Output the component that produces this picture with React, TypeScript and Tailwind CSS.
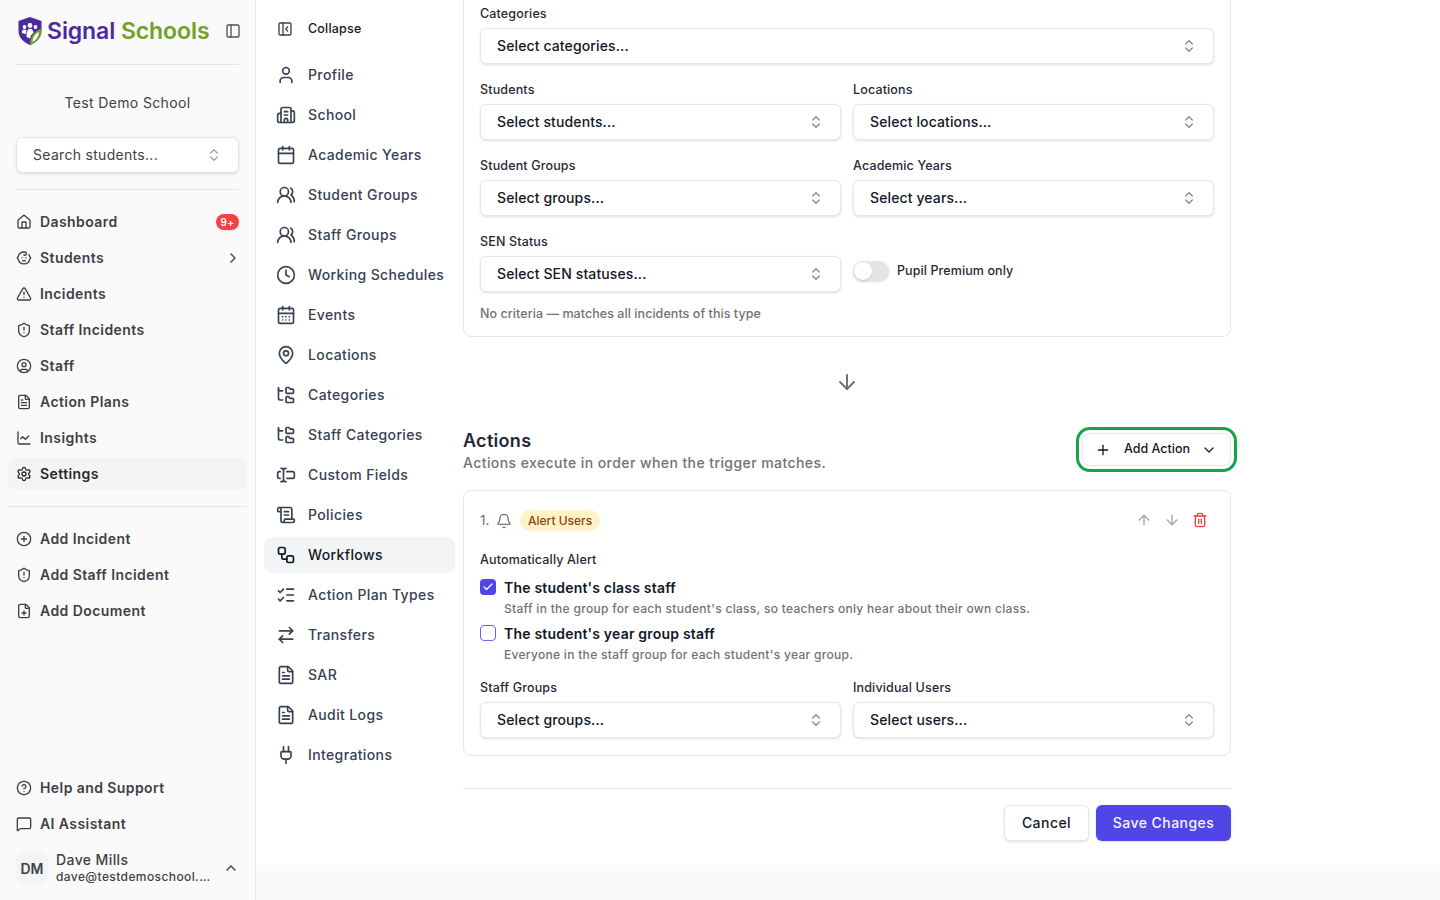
import React from "react";
import {
  House, Baby, TriangleAlert, ShieldAlert, CircleUser, FileText, ChartLine, Settings, CirclePlus, FilePlus,
  CircleHelp, MessageSquare, ChevronUp, ChevronRight, ChevronDown, ChevronsUpDown, PanelLeft, PanelLeftClose, User,
  Building2, Calendar, UsersRound, Clock, CalendarDays, MapPin, FolderTree, TextCursorInput, ScrollText, Workflow,
  ListChecks, ArrowRightLeft, Plug, ArrowDown, ArrowUp, Plus, Bell, Trash2, Check,
} from "lucide-react";

function NavItem({ icon: Icon, label, active, right }: { icon: any; label: string; active?: boolean; right?: React.ReactNode }) {
  return (
    <div className={`flex h-8 items-center gap-2 rounded-lg px-2 text-[14px] font-semibold tracking-[0.42px] ${active ? "bg-[#f4f4f5] text-[#27272a]" : "text-[#3f3f46]"}`}>
      <Icon size={16} strokeWidth={2} className="shrink-0" />
      <span className="flex-1 whitespace-nowrap pb-[2px]">{label}</span>
      {right}
    </div>
  );
}

function SettingsItem({ icon: Icon, label, active }: { icon: any; label: string; active?: boolean }) {
  return (
    <div className={`flex h-9 w-[191px] items-center gap-3 rounded-lg px-3 text-[14px] font-medium tracking-[0.38px] ${active ? "bg-[#f3f4f6] text-[#111827]" : "text-[#374151]"}`}>
      <Icon size={20} strokeWidth={2} className="shrink-0" />
      <span className="whitespace-nowrap pb-[2px]">{label}</span>
    </div>
  );
}

function Field({ label, placeholder }: { label: string; placeholder: string }) {
  return (
    <div className="flex flex-col gap-1">
      <div className="h-5 text-[12.5px] font-medium leading-5 tracking-[0.15px] text-[#1f2937]">{label}</div>
      <Select placeholder={placeholder} />
    </div>
  );
}

function Select({ placeholder }: { placeholder: string }) {
  return (
    <div className="flex h-9 items-center justify-between rounded-md border border-[#e5e7eb] bg-white pl-4 pr-4 text-[14px] font-medium tracking-[0.12px] text-[#111827] shadow-sm">
      <span className="pb-[2px]">{placeholder}</span>
      <ChevronsUpDown size={16} className="text-[#8a8a93]" />
    </div>
  );
}

function Logo() {
  return (
    <svg width="26" height="30" viewBox="0 0 26 30" className="shrink-0">
      <path d="M13 1 L24.5 5 V15 C24.5 22 19 26.5 13 29 C7 26.5 1.5 22 1.5 15 V5 Z" fill="#4a2a9e" />
      <path d="M24.5 12.5 V15 C24.5 22 19 26.5 13 29 C12.4 23 16 15.5 24.5 12.5 Z" fill="#6fa327" />
      <path d="M15.5 26 C15.5 21 18.5 17.5 22 16 C21.5 20.5 19.5 24 15.5 26 Z" fill="#ffffff" />
      <circle cx="13" cy="9.5" r="2.4" fill="#fff" />
      <circle cx="7.5" cy="11" r="1.9" fill="#fff" />
      <circle cx="18.5" cy="11" r="1.9" fill="#fff" />
      <path d="M4.8 17 C4.8 14.6 6 13.6 7.5 13.6 C8.4 13.6 9.1 13.9 9.6 14.5 C8.9 15.6 8.8 16.6 8.9 18 Z" fill="#fff" />
      <path d="M9.6 21 C9.3 16 10.6 12.8 13 12.8 C15.4 12.8 16.4 14.8 16.5 17 C15 18 13.5 19.8 13 22.5 Z" fill="#fff" />
    </svg>
  );
}

const settingsItems: [any, string][] = [
  [User, "Profile"], [Building2, "School"], [Calendar, "Academic Years"], [UsersRound, "Student Groups"],
  [UsersRound, "Staff Groups"], [Clock, "Working Schedules"], [CalendarDays, "Events"], [MapPin, "Locations"],
  [FolderTree, "Categories"], [FolderTree, "Staff Categories"], [TextCursorInput, "Custom Fields"], [ScrollText, "Policies"],
  [Workflow, "Workflows"], [ListChecks, "Action Plan Types"], [ArrowRightLeft, "Transfers"], [FileText, "SAR"],
  [FileText, "Audit Logs"], [Plug, "Integrations"],
];

export default function App() {
  return (
    <div className="flex h-[900px] w-[1440px] overflow-hidden bg-white font-['Inter','Liberation_Sans',sans-serif]">
      {/* Primary sidebar */}
      <aside className="flex h-full w-[256px] shrink-0 flex-col border-r border-[#e5e7eb] bg-[#fafafa] px-2">
        <div className="mx-2 flex h-[65px] items-center border-b border-[#e4e4e7] pb-[2px]">
          <div className="ml-[1px]"><Logo /></div>
          <div className="ml-[4px] flex-1 whitespace-nowrap text-[23px] font-semibold tracking-[-0.08px]">
            <span className="text-[#4a2a9e]">Signal</span> <span className="text-[#6fa327]">Schools</span>
          </div>
          <PanelLeft size={16} className="text-[#52525b] mr-[-2px]" />
        </div>
        <div className="mt-[28px] h-5 text-center text-[14px] leading-5 tracking-[0.35px] text-[#3f3f46]">Test Demo School</div>
        <div className="mx-2 mt-[24px] flex h-9 items-center justify-between rounded-md border border-[#e4e4e7] bg-white pl-4 pr-[16px] text-[14px] tracking-[0.3px] text-[#3f3f46] shadow-sm">
          <span className="pb-[2px]">Search students...</span>
          <ChevronsUpDown size={16} className="text-[#a1a1aa]" />
        </div>
        <div className="mx-2 mt-4 border-b border-[#e4e4e7]" />
        <div className="mt-4 flex flex-col gap-1">
          <NavItem icon={House} label="Dashboard" right={<span className="w-[23px] rounded-lg bg-[#ef4444] text-center text-[10px] font-semibold leading-4 text-white shadow-sm">9+</span>} />
          <NavItem icon={Baby} label="Students" right={<ChevronRight size={16} className="-mr-[2px] text-[#3f3f46]" />} />
          <NavItem icon={TriangleAlert} label="Incidents" />
          <NavItem icon={ShieldAlert} label="Staff Incidents" />
          <NavItem icon={CircleUser} label="Staff" />
          <NavItem icon={FileText} label="Action Plans" />
          <NavItem icon={ChartLine} label="Insights" />
          <NavItem icon={Settings} label="Settings" active />
        </div>
        <div className="mt-4 border-b border-[#e4e4e7]" />
        <div className="mt-4 flex flex-col gap-1">
          <NavItem icon={CirclePlus} label="Add Incident" />
          <NavItem icon={ShieldAlert} label="Add Staff Incident" />
          <NavItem icon={FilePlus} label="Add Document" />
        </div>
        <div className="mt-auto flex flex-col gap-1">
          <NavItem icon={CircleHelp} label="Help and Support" />
          <NavItem icon={MessageSquare} label="AI Assistant" />
        </div>
        <div className="mb-4 mt-3 flex h-8 items-center gap-2 pl-2 pr-2">
          <div className="flex h-8 w-8 shrink-0 items-center justify-center rounded-lg bg-[#f4f4f5] text-[14px] font-semibold text-[#3f3f46]">DM</div>
          <div className="min-w-0 flex-1">
            <div className="text-[14px] font-medium leading-4 tracking-[0.4px] text-[#3f3f46]">Dave Mills</div>
            <div className="mt-[1px] w-[156px] truncate text-[12px] font-medium leading-4 tracking-[0.4px] text-[#3f3f46]">dave@testdemoschool.org.uk</div>
          </div>
          <ChevronUp size={16} className="text-[#3f3f46]" />
        </div>
      </aside>

      {/* Main column */}
      <div className="flex min-w-0 flex-1 flex-col">
        <div className="flex h-[865px] bg-white">
          {/* Settings nav */}
          <nav className="flex w-[207px] shrink-0 flex-col gap-1 pl-2 pt-[11px]">
            <div className="mb-[6px] flex h-9 items-center gap-3 px-3 text-[12.5px] font-medium tracking-[0.2px] text-[#111827]">
              <PanelLeftClose size={16} className="mx-[1px] text-[#374151]" />
              <span className="ml-[2px]">Collapse</span>
            </div>
            {settingsItems.map(([icon, label]) => (
              <SettingsItem key={label} icon={icon} label={label} active={label === "Workflows"} />
            ))}
          </nav>

          {/* Content */}
          <main className="-mt-[13px] w-[768px] shrink-0">
            <section className="flex flex-col gap-4 rounded-lg border border-[#e5e7eb] px-4 pb-[13px] pt-4">
              <Field label="Categories" placeholder="Select categories..." />
              <div className="grid grid-cols-2 gap-x-3 gap-y-4">
                <Field label="Students" placeholder="Select students..." />
                <Field label="Locations" placeholder="Select locations..." />
                <Field label="Student Groups" placeholder="Select groups..." />
                <Field label="Academic Years" placeholder="Select years..." />
                <Field label="SEN Status" placeholder="Select SEN statuses..." />
                <div className="mt-[29px] flex h-5 items-center gap-2">
                  <div className="flex h-5 w-9 items-center rounded-full bg-[#e5e5e5] pl-[1px] shadow-sm">
                    <div className="h-[18px] w-[18px] rounded-full bg-white shadow" />
                  </div>
                  <span className="text-[12.5px] font-medium tracking-[0.1px] text-[#1f2937]">Pupil Premium only</span>
                </div>
              </div>
              <div className="-mt-[3px] h-[18px] text-[12.5px] font-medium leading-[18px] tracking-[0.06px] text-[#71717a]">No criteria — matches all incidents of this type</div>
            </section>

            <div className="mt-[33px] flex justify-center">
              <ArrowDown size={24} className="text-[#71717a]" />
            </div>

            <div className="mt-[30px] flex items-start justify-between">
              <div className="pt-[3px]">
                <h2 className="text-[18px] font-semibold leading-7 tracking-[0.3px] text-[#1f2937]">Actions</h2>
                <p className="-mt-[2px] text-[14px] font-medium leading-5 tracking-[0.42px] text-[#71717a]">Actions execute in order when the trigger matches.</p>
              </div>
              <button className="mt-[9px] flex h-[33px] w-[149px] items-center rounded-lg border border-[#e5e7eb] bg-white pl-[12px] text-[12.5px] font-medium tracking-[0px] text-[#111827] outline-[3px] outline-offset-[3px] outline-[#16a34a]">
                <Plus size={16} />
                <span className="ml-[13px]">Add Action</span>
                <ChevronDown size={16} className="ml-[11px] text-[#27272a]" />
              </button>
            </div>

            <section className="mt-[17px] rounded-lg border border-[#e5e7eb] px-4 pb-[17px] pt-[19px]">
              <div className="flex h-[21px] items-center">
                <span className="w-[16px] text-[13.5px] text-[#71717a]">1.</span>
                <Bell size={16} className="text-[#71717a]" />
                <span className="ml-2 rounded-full bg-[#fef3c7] px-2 text-[12px] font-medium leading-[21px] text-[#92400e]">Alert Users</span>
                <div className="ml-auto flex items-center gap-3 pb-[2px] pr-[6px]">
                  <ArrowUp size={16} className="text-[#a1a1aa]" />
                  <ArrowDown size={16} className="text-[#a1a1aa]" />
                  <Trash2 size={16} className="text-[#ef4444]" />
                </div>
              </div>
              <div className="mt-[19px] h-[20px] text-[12.5px] font-medium leading-5 tracking-[0.15px] text-[#1f2937]">Automatically Alert</div>
              <div className="mt-[8px] flex gap-2">
                <div className="mt-[1px] flex h-4 w-4 items-center justify-center rounded-[4px] bg-[#4f46e5]"><Check size={12} strokeWidth={2.5} className="text-white" /></div>
                <div>
                  <div className="h-[20px] text-[14px] font-semibold leading-5 tracking-[0.2px] text-[#111827]">The student's class staff</div>
                  <div className="mt-[2px] h-[18px] text-[12px] font-medium leading-[18px] tracking-[0.3px] text-[#71717a]">Staff in the group for each student's class, so teachers only hear about their own class.</div>
                </div>
              </div>
              <div className="mt-[6px] flex gap-2">
                <div className="mt-[1px] h-4 w-4 rounded-[4px] border border-[#6366f1] bg-white" />
                <div>
                  <div className="h-[20px] text-[14px] font-semibold leading-5 tracking-[0.2px] text-[#111827]">The student's year group staff</div>
                  <div className="mt-[2px] h-[18px] text-[12px] font-medium leading-[18px] tracking-[0.3px] text-[#71717a]">Everyone in the staff group for each student's year group.</div>
                </div>
              </div>
              <div className="mt-[14px] grid grid-cols-2 gap-x-3">
                <Field label="Staff Groups" placeholder="Select groups..." />
                <Field label="Individual Users" placeholder="Select users..." />
              </div>
            </section>

            <div className="mt-[32px] flex justify-end gap-[7px] border-t border-[#e5e7eb] pt-4">
              <button className="h-9 w-[85px] rounded-md border border-[#e5e7eb] bg-white pb-[2px] text-[14px] font-medium tracking-[0.45px] text-[#111827] shadow-sm">Cancel</button>
              <button className="h-9 w-[135px] rounded-md bg-[#4f46e5] pb-[2px] text-[14px] font-medium tracking-[0.45px] text-[#f5f5ff] shadow-sm">Save Changes</button>
            </div>
          </main>
        </div>
        <div className="flex-1 bg-[#f9fafb]" />
      </div>
    </div>
  );
}
